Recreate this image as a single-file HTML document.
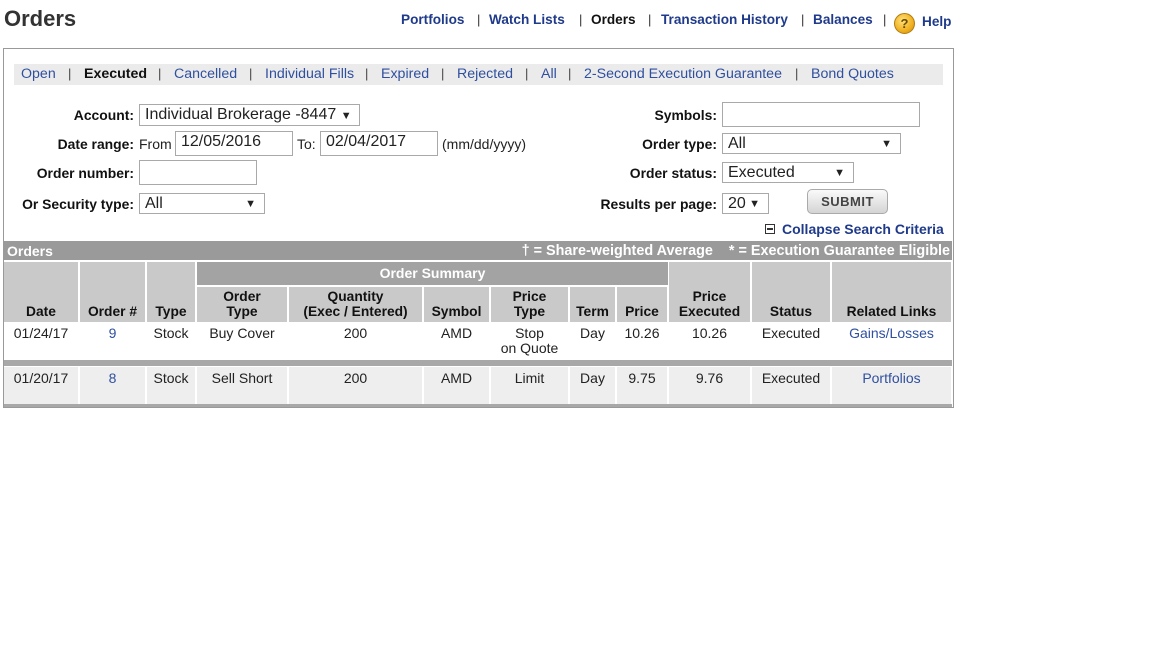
<!DOCTYPE html>
<html><head><meta charset="utf-8"><style>
*{margin:0;padding:0;box-sizing:border-box}
body{width:1152px;height:648px;background:#fff;font-family:"Liberation Sans",Arial,sans-serif;position:relative;overflow:hidden;color:#222}
.a{position:absolute;white-space:nowrap}
.nav{font-size:13.6px;font-weight:bold;color:#1f3a8a;top:12px}
.sep{font-size:13px;color:#333;top:12px}
.tab{font-size:14.2px;color:#2f4f9f;top:66px}
.ts{font-size:13px;color:#444;top:66px}
.lbl{font-size:13.9px;font-weight:bold;color:#111;text-align:right}
.in{position:absolute;border:1px solid #a9a9a9;background:#fff;font-size:16px;color:#222;padding-left:5px;line-height:20px}
.in .ar{position:absolute;right:8px;top:0;font-size:11px}
.c{position:absolute;text-align:center;font-size:14px}
.h{background:#c9c9c9;font-weight:bold;color:#111;display:flex;align-items:flex-end;justify-content:center;padding-bottom:3px;line-height:15px;font-size:13.8px}
.d{color:#222;padding-top:4px;line-height:15px}
.lk{color:#2f4f9f}
</style></head><body>
<div class="a" style="left:4px;top:6px;font-size:22px;font-weight:bold;color:#333">Orders</div>
<div class="a nav" style="left:401px">Portfolios</div>
<div class="a sep" style="left:477px">|</div>
<div class="a nav" style="left:489px">Watch Lists</div>
<div class="a sep" style="left:579px">|</div>
<div class="a nav" style="left:591px;color:#111">Orders</div>
<div class="a sep" style="left:648px">|</div>
<div class="a nav" style="left:661px">Transaction History</div>
<div class="a sep" style="left:801px">|</div>
<div class="a nav" style="left:813px">Balances</div>
<div class="a sep" style="left:883px">|</div>
<div class="a" style="left:894px;top:13px;width:21px;height:21px;border-radius:50%;background:radial-gradient(circle at 40% 35%,#ffe27a,#f0b020 60%,#c98a10);border:1px solid #b07a10;font-size:13px;font-weight:bold;color:#6b4a00;text-align:center;line-height:19px">?</div>
<div class="a nav" style="left:922px;top:14px">Help</div>

<div class="a" style="left:3px;top:48px;width:951px;height:360px;border:1px solid #999"></div>
<div class="a" style="left:14px;top:64px;width:929px;height:21px;background:#ebebeb"></div>
<div class="a tab" style="left:21px">Open</div><div class="a ts" style="left:68px">|</div>
<div class="a tab" style="left:84px;color:#111;font-weight:bold">Executed</div><div class="a ts" style="left:158px">|</div>
<div class="a tab" style="left:174px">Cancelled</div><div class="a ts" style="left:249px">|</div>
<div class="a tab" style="left:265px">Individual Fills</div><div class="a ts" style="left:365px">|</div>
<div class="a tab" style="left:381px">Expired</div><div class="a ts" style="left:441px">|</div>
<div class="a tab" style="left:457px">Rejected</div><div class="a ts" style="left:525px">|</div>
<div class="a tab" style="left:541px">All</div><div class="a ts" style="left:568px">|</div>
<div class="a tab" style="left:584px">2-Second Execution Guarantee</div><div class="a ts" style="left:795px">|</div>
<div class="a tab" style="left:811px">Bond Quotes</div>

<div class="a lbl" style="right:1018px;top:107px">Account:</div>
<div class="in" style="left:139px;top:104px;width:221px;height:22px">Individual Brokerage -8447 <span style="font-size:11px">▼</span></div>
<div class="a lbl" style="right:1018px;top:136px">Date range:</div>
<div class="a" style="left:139px;top:136px;font-size:14px">From</div>
<div class="in" style="left:175px;top:131px;width:118px;height:25px">12/05/2016</div>
<div class="a" style="left:297px;top:136px;font-size:14px">To:</div>
<div class="in" style="left:320px;top:131px;width:118px;height:25px">02/04/2017</div>
<div class="a" style="left:442px;top:136px;font-size:14px">(mm/dd/yyyy)</div>
<div class="a lbl" style="right:1018px;top:165px">Order number:</div>
<div class="in" style="left:139px;top:160px;width:118px;height:25px"></div>
<div class="a lbl" style="right:1018px;top:196px">Or Security type:</div>
<div class="in" style="left:139px;top:193px;width:126px;height:21px">All<span class="ar">▼</span></div>

<div class="a lbl" style="right:435px;top:107px">Symbols:</div>
<div class="in" style="left:722px;top:102px;width:198px;height:25px"></div>
<div class="a lbl" style="right:435px;top:136px">Order type:</div>
<div class="in" style="left:722px;top:133px;width:179px;height:21px">All<span class="ar">▼</span></div>
<div class="a lbl" style="right:435px;top:165px">Order status:</div>
<div class="in" style="left:722px;top:162px;width:132px;height:21px">Executed<span class="ar">▼</span></div>
<div class="a lbl" style="right:435px;top:196px">Results per page:</div>
<div class="in" style="left:722px;top:193px;width:47px;height:21px">20<span class="ar">▼</span></div>
<div class="a" style="left:807px;top:189px;width:81px;height:25px;border:1px solid #aaa;border-radius:5px;background:linear-gradient(#fafafa,#d4d4d4);font-size:13px;font-weight:bold;color:#444;text-align:center;line-height:23px;letter-spacing:0.5px">SUBMIT</div>
<div class="a" style="left:765px;top:224px;width:10px;height:10px;border:1px solid #333;font-size:0"><div style="margin:3px 1px;height:2px;background:#333"></div></div>
<div class="a" style="left:782px;top:221px;font-size:14px;font-weight:bold;color:#1f3a8a">Collapse Search Criteria</div>

<div class="a" style="left:4px;top:241px;width:948px;height:19px;background:#9a9a9a"></div>
<div class="a" style="left:7px;top:243px;font-size:14px;font-weight:bold;color:#fff">Orders</div>
<div class="a" style="right:202px;top:243px;font-size:14.4px;font-weight:bold;color:#fff">† = Share-weighted Average &nbsp;&nbsp; * = Execution Guarantee Eligible</div>

<div class="c h" style="left:4px;top:262px;width:74px;height:60px">Date</div>
<div class="c h" style="left:80px;top:262px;width:65px;height:60px">Order #</div>
<div class="c h" style="left:147px;top:262px;width:48px;height:60px">Type</div>
<div class="c" style="left:197px;top:262px;width:471px;height:23px;background:#a3a3a3;color:#fff;font-weight:bold;line-height:23px">Order Summary</div>
<div class="c h" style="left:197px;top:287px;width:90px;height:35px">Order<br>Type</div>
<div class="c h" style="left:289px;top:287px;width:133px;height:35px">Quantity<br>(Exec / Entered)</div>
<div class="c h" style="left:424px;top:287px;width:65px;height:35px">Symbol</div>
<div class="c h" style="left:491px;top:287px;width:77px;height:35px">Price<br>Type</div>
<div class="c h" style="left:570px;top:287px;width:45px;height:35px">Term</div>
<div class="c h" style="left:617px;top:287px;width:50px;height:35px">Price</div>
<div class="c h" style="left:669px;top:262px;width:81px;height:60px">Price<br>Executed</div>
<div class="c h" style="left:752px;top:262px;width:78px;height:60px">Status</div>
<div class="c h" style="left:832px;top:262px;width:119px;height:60px">Related Links</div>

<div class="c d" style="left:4px;top:322px;width:74px">01/24/17</div>
<div class="c d lk" style="left:80px;top:322px;width:65px">9</div>
<div class="c d" style="left:147px;top:322px;width:48px">Stock</div>
<div class="c d" style="left:197px;top:322px;width:90px">Buy Cover</div>
<div class="c d" style="left:289px;top:322px;width:133px">200</div>
<div class="c d" style="left:424px;top:322px;width:65px">AMD</div>
<div class="c d" style="left:491px;top:322px;width:77px">Stop<br>on Quote</div>
<div class="c d" style="left:570px;top:322px;width:45px">Day</div>
<div class="c d" style="left:617px;top:322px;width:50px">10.26</div>
<div class="c d" style="left:669px;top:322px;width:81px">10.26</div>
<div class="c d" style="left:752px;top:322px;width:78px">Executed</div>
<div class="c d lk" style="left:832px;top:322px;width:119px">Gains/Losses</div>

<div class="a" style="left:4px;top:360px;width:948px;height:6px;background:#a8a8a8"></div>

<div class="a" style="left:4px;top:367px;width:948px;height:37px;background:#fff"></div>
<div class="c d" style="left:4px;top:367px;width:74px;height:37px;background:#eee">01/20/17</div>
<div class="c d lk" style="left:80px;top:367px;width:65px;height:37px;background:#eee">8</div>
<div class="c d" style="left:147px;top:367px;width:48px;height:37px;background:#eee">Stock</div>
<div class="c d" style="left:197px;top:367px;width:90px;height:37px;background:#eee">Sell Short</div>
<div class="c d" style="left:289px;top:367px;width:133px;height:37px;background:#eee">200</div>
<div class="c d" style="left:424px;top:367px;width:65px;height:37px;background:#eee">AMD</div>
<div class="c d" style="left:491px;top:367px;width:77px;height:37px;background:#eee">Limit</div>
<div class="c d" style="left:570px;top:367px;width:45px;height:37px;background:#eee">Day</div>
<div class="c d" style="left:617px;top:367px;width:50px;height:37px;background:#eee">9.75</div>
<div class="c d" style="left:669px;top:367px;width:81px;height:37px;background:#eee">9.76</div>
<div class="c d" style="left:752px;top:367px;width:78px;height:37px;background:#eee">Executed</div>
<div class="c d lk" style="left:832px;top:367px;width:119px;height:37px;background:#eee">Portfolios</div>
<div class="a" style="left:4px;top:404px;width:948px;height:3px;background:#a8a8a8"></div>
</body></html>
